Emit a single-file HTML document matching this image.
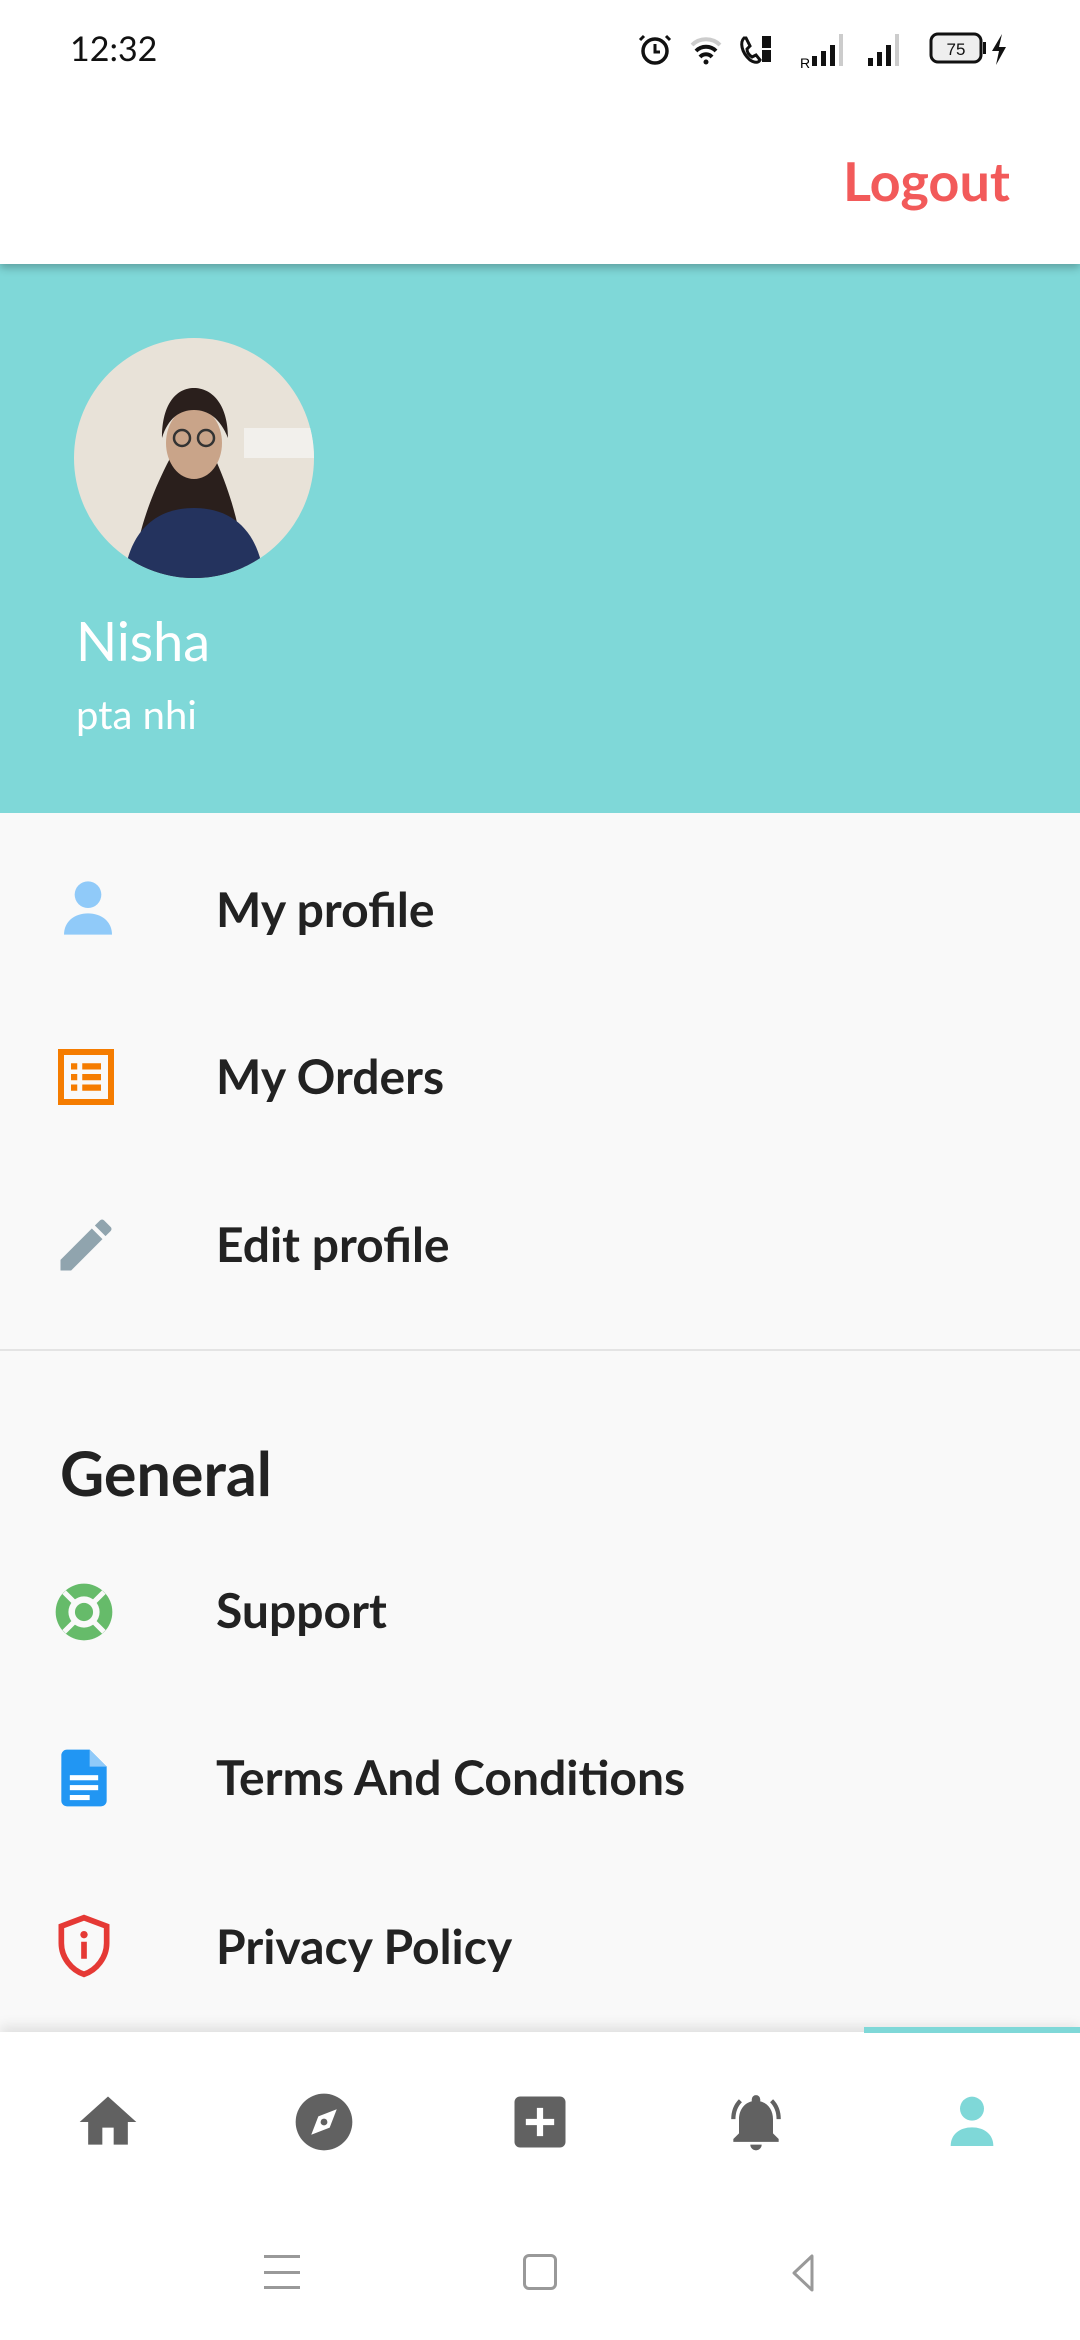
<!DOCTYPE html>
<html><head><meta charset="utf-8"><style>
*{margin:0;padding:0;box-sizing:border-box}
body{width:1080px;height:2340px;position:relative;overflow:hidden;background:#f9f9f9;font-family:"Lato","Liberation Sans",sans-serif;color:#222}
.abs{position:absolute}
.item{position:absolute;left:216px;font-size:48px;font-weight:bold;color:#222;line-height:1}
</style></head><body>
<div class="abs" style="left:0;top:0;width:1080px;height:264px;background:#fff;box-shadow:0 4px 8px rgba(0,0,0,.25);z-index:2">
  <div class="abs" style="left:70px;top:28px;font-size:34px;color:#111">12:32</div>
  <svg class="abs" style="left:636px;top:30px" width="380" height="40" viewBox="0 0 380 40">
    <circle cx="19" cy="21" r="12" fill="none" stroke="#111" stroke-width="3.5"/><path d="M19 14v8h5" stroke="#111" stroke-width="3" fill="none"/><path d="M8 6l-4 4M30 6l4 4" stroke="#111" stroke-width="3"/>
    <path d="M56 15a20 20 0 0128 0" stroke="#ccc" stroke-width="4" fill="none"/><path d="M60 21a14 14 0 0120 0M64 27a8 8 0 0112 0" stroke="#111" stroke-width="4" fill="none"/><circle cx="70" cy="32" r="2.5" fill="#111"/>
    <path d="M108 8c-4 4-3 14 6 22 6 4 9 2 10 0l-4-5-4 2c-3-2-5-5-5-8l3-3-4-8z" fill="none" stroke="#111" stroke-width="3"/><rect x="126" y="6" width="9" height="12" fill="#111"/><rect x="126" y="20" width="9" height="12" fill="#111"/>
    <text x="164" y="38" font-size="14" font-family="Liberation Sans">R</text>
    <rect x="176" y="26" width="5" height="10" fill="#111"/><rect x="185" y="21" width="5" height="15" fill="#111"/><rect x="194" y="15" width="5" height="21" fill="#111"/><rect x="203" y="4" width="4" height="32" fill="#ccc"/>
    <rect x="232" y="28" width="5" height="8" fill="#111"/><rect x="241" y="22" width="5" height="14" fill="#111"/><rect x="250" y="15" width="5" height="21" fill="#111"/><rect x="259" y="4" width="4" height="32" fill="#ccc"/>
    <rect x="295" y="4" width="50" height="28" rx="7" fill="#eee" stroke="#111" stroke-width="3"/><text x="320" y="25" font-size="17" text-anchor="middle" font-family="Liberation Sans" fill="#111">75</text><rect x="347" y="12" width="3" height="12" fill="#111"/>
    <path d="M366 4l-10 17h7l-3 14 10-18h-7z" fill="#111"/>
  </svg>
  <div class="abs" style="right:70px;top:148px;font-size:54px;font-weight:bold;color:#f25a5a">Logout</div>
</div>
<div class="abs" style="left:0;top:264px;width:1080px;height:549px;background:#7fd8d8">
  <svg class="abs" style="left:74px;top:74px" width="240" height="240" viewBox="0 0 240 240">
    <defs><clipPath id="c"><circle cx="120" cy="120" r="120"/></clipPath></defs>
    <g clip-path="url(#c)">
      <rect width="240" height="240" fill="#e8e2d8"/>
      <rect x="170" y="90" width="70" height="30" fill="#f2f0ec"/>
      <path d="M60 240c0-40 20-100 60-160c30 50 50 110 50 160z" fill="#2a1f1c"/>
      <path d="M50 240c5-45 30-70 70-70s65 25 70 70z" fill="#24335e"/>
      <ellipse cx="120" cy="105" rx="28" ry="36" fill="#c9a489"/>
      <path d="M88 100c0-35 15-50 32-50s34 15 34 50c-8-20-20-28-34-28s-26 8-32 28z" fill="#2a1f1c"/>
      <circle cx="108" cy="100" r="8" fill="none" stroke="#333" stroke-width="2.5"/><circle cx="132" cy="100" r="8" fill="none" stroke="#333" stroke-width="2.5"/>
    </g>
  </svg>
  <div class="abs" style="left:76px;top:344px;font-size:54px;color:#fff">Nisha</div>
  <div class="abs" style="left:76px;top:426px;font-size:40px;color:#fff">pta nhi</div>
</div>
<svg class="abs" style="left:56px;top:876px" width="64" height="64" viewBox="0 0 24 24"><circle cx="12" cy="7" r="5" fill="#90caf9"/><path d="M3 22c0-5 4-8 9-8s9 3 9 8z" fill="#90caf9"/></svg>
<div class="item" style="top:886px">My profile</div>
<svg class="abs" style="left:56px;top:1047px" width="60" height="60" viewBox="0 0 24 24"><rect x="2" y="2" width="20" height="20" fill="none" stroke="#f57c00" stroke-width="2.4"/><g fill="#f57c00"><rect x="6" y="6.5" width="2.5" height="2.5"/><rect x="10.5" y="6.5" width="7.5" height="2.5"/><rect x="6" y="10.8" width="2.5" height="2.5"/><rect x="10.5" y="10.8" width="7.5" height="2.5"/><rect x="6" y="15" width="2.5" height="2.5"/><rect x="10.5" y="15" width="7.5" height="2.5"/></g></svg>
<div class="item" style="top:1053px">My Orders</div>
<svg class="abs" style="left:52px;top:1211px" width="68" height="68" viewBox="0 0 24 24"><path d="M3 17.25V21h3.75L17.81 9.94l-3.75-3.75zM20.71 7.04a1 1 0 000-1.41l-2.34-2.34a1 1 0 00-1.41 0l-1.83 1.83 3.75 3.75z" fill="#90a4ae"/></svg>
<div class="item" style="top:1221px">Edit profile</div>
<div class="abs" style="left:0;top:1349px;width:1080px;height:2px;background:#e4e4e4"></div>
<div class="abs" style="left:60px;top:1436px;font-size:61px;font-weight:bold;color:#222">General</div>
<svg class="abs" style="left:50px;top:1578px" width="68" height="68" viewBox="0 0 24 24"><circle cx="12" cy="12" r="10" fill="#66bb6a"/><circle cx="12" cy="12" r="5.5" fill="#f9f9f9"/><circle cx="12" cy="12" r="3.2" fill="#66bb6a"/><g stroke="#f9f9f9" stroke-width="1.8"><path d="M5 5l3.5 3.5M19 5l-3.5 3.5M5 19l3.5-3.5M19 19l-3.5-3.5"/></g></svg>
<div class="item" style="top:1587px">Support</div>
<svg class="abs" style="left:50px;top:1744px" width="68" height="68" viewBox="0 0 24 24"><path d="M6 2h8l6 6v12a2 2 0 01-2 2H6a2 2 0 01-2-2V4a2 2 0 012-2z" fill="#2196f3"/><path d="M14 2v6h6" fill="#90caf9"/><g fill="#fff"><rect x="7" y="11" width="10" height="1.8"/><rect x="7" y="14.5" width="10" height="1.8"/><rect x="7" y="18" width="7" height="1.8"/></g></svg>
<div class="item" style="top:1754px">Terms And Conditions</div>
<svg class="abs" style="left:50px;top:1912px" width="68" height="68" viewBox="0 0 24 24"><path d="M12 2l8 3v6c0 5-3.5 9.5-8 11-4.5-1.5-8-6-8-11V5z" fill="none" stroke="#e53935" stroke-width="2"/><circle cx="12" cy="8" r="1.3" fill="#e53935"/><rect x="11" y="10.5" width="2" height="6" fill="#e53935"/></svg>
<div class="item" style="top:1923px">Privacy Policy</div>
<div class="abs" style="left:0;top:2032px;width:1080px;height:308px;background:#fff;box-shadow:0 -6px 12px rgba(0,0,0,.1)"></div>
<div class="abs" style="left:864px;top:2027px;width:216px;height:6px;background:#7fd8d8"></div>
<svg class="abs" style="left:74px;top:2088px" width="68" height="68" viewBox="0 0 24 24"><path d="M10 20v-6h4v6h5v-8h3L12 3 2 12h3v8z" fill="#616161"/></svg>
<svg class="abs" style="left:290px;top:2088px" width="68" height="68" viewBox="0 0 24 24"><circle cx="12" cy="12" r="10" fill="#616161"/><path d="M16.5 7.5L14 14l-6.5 2.5L10 10z" fill="#fff"/><circle cx="12" cy="12" r="1.2" fill="#616161"/></svg>
<svg class="abs" style="left:506px;top:2088px" width="68" height="68" viewBox="0 0 24 24"><rect x="3" y="3" width="18" height="18" rx="2" fill="#616161"/><path d="M12 7v10M7 12h10" stroke="#fff" stroke-width="2.2"/></svg>
<svg class="abs" style="left:722px;top:2088px" width="68" height="68" viewBox="0 0 24 24"><path d="M12 22a2 2 0 002-2h-4a2 2 0 002 2zm6-6v-5c0-3-1.6-5.6-4.5-6.3V4a1.5 1.5 0 00-3 0v.7C7.6 5.4 6 8 6 11v5l-2 2v1h16v-1z" fill="#616161"/><path d="M4 11c0-3 1-5 2.5-6.5M20 11c0-3-1-5-2.5-6.5" stroke="#616161" stroke-width="1.5" fill="none"/></svg>
<svg class="abs" style="left:940px;top:2090px" width="64" height="64" viewBox="0 0 24 24"><circle cx="12" cy="7" r="4.5" fill="#7fd8d8"/><path d="M4 21c0-4.5 3.5-7 8-7s8 2.5 8 7z" fill="#7fd8d8"/></svg>
<div class="abs" style="left:264px;top:2255px;width:36px;height:34px;border-top:3px solid #999;border-bottom:3px solid #999"><div style="margin-top:13px;height:3px;background:#999"></div></div>
<div class="abs" style="left:523px;top:2254px;width:34px;height:36px;border:3px solid #999;border-radius:6px"></div>
<svg class="abs" style="left:778px;top:2253px" width="40" height="40" viewBox="0 0 40 40"><path d="M34 3v34L16 20z" fill="none" stroke="#999" stroke-width="3" stroke-linejoin="round"/></svg>
</body></html>
